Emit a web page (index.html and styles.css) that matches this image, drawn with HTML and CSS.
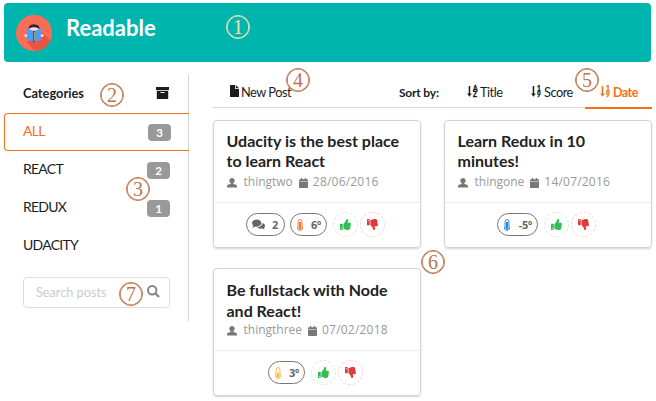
FILE: index.html
```html
<!DOCTYPE html>
<html lang="en">
<head>
<meta charset="utf-8">
<title>Readable</title>
<link rel="stylesheet" href="styles.css">
</head>
<body>
<svg class="defs" width="0" height="0">
  <symbol id="thumb" viewBox="0 0 512 512"><path d="M104 224H24c-13.255 0-24 10.745-24 24v240c0 13.255 10.745 24 24 24h80c13.255 0 24-10.745 24-24V248c0-13.255-10.745-24-24-24zM64 472c-13.255 0-24-10.745-24-24s10.745-24 24-24 24 10.745 24 24-10.745 24-24 24zM384 81.452c0 42.416-25.97 66.208-33.277 94.548h101.723c33.397 0 59.397 27.746 59.553 58.098.084 17.938-7.546 37.249-19.439 49.197l-.11.11c9.836 23.337 8.237 56.037-9.308 79.469 8.681 25.895-.069 57.704-16.382 74.757 4.298 17.598 2.244 32.575-6.148 44.632C440.202 511.587 389.616 512 346.839 512l-2.845-.001c-48.287-.017-87.806-17.598-119.56-31.725-15.957-7.099-36.821-15.887-52.651-16.178-6.54-.12-11.783-5.457-11.783-11.998v-213.77c0-3.2 1.282-6.271 3.558-8.521 39.614-39.144 56.648-80.587 89.117-113.111 14.804-14.832 20.188-37.236 25.393-58.902C282.515 39.293 291.817 0 312 0c24 0 72 8 72 81.452z"/></symbol>
  <symbol id="user" viewBox="0 0 10 10"><path d="M5 0a2.7 2.7 0 0 1 1.7 4.8C6.4 5.1 6.2 5.5 6.3 6l2 .6C9.400 6.900 10 7.600 10 8.600V9.500H0V8.600C0 7.600.6 6.900 1.700 6.600l2-.6c.1-.5-.1-.9-.4-1.200A2.700 2.700 0 0 1 5 0z"/></symbol>
  <symbol id="cal" viewBox="0 0 9 10"><path d="M0 3.500h9v5.600a.9.9 0 0 1-.9.9H.9a.9.900 0 0 1-.9-.9zM0 2.900v-.8c0-.5.4-.9.900-.9h1V0h1.300v1.200h2.600V0h1.300v1.200h1c.5 0 .9.400.9.900v.8z"/></symbol>
  <symbol id="thermo" viewBox="0 0 6 12"><path d="M1.100 7V2.500a1.900 1.900 0 0 1 3.800 0V7a2.600 2.600 0 1 1-3.800 0z" fill="none" stroke="currentColor" stroke-width="1"/><circle cx="3" cy="8.900" r="1.600"/></symbol>
  <symbol id="thermo-full" viewBox="0 0 6 12"><use href="#thermo" width="6" height="12"/><path d="M2 3h2v5H2z"/></symbol>
  <symbol id="thermo-half" viewBox="0 0 6 12"><use href="#thermo" width="6" height="12"/><path d="M2.300 5.500h1.400V8H2.300z"/></symbol>
  <symbol id="chat" viewBox="0 0 13 11"><path d="M4.700.5c2.600 0 4.700 1.500 4.700 3.600S7.300 7.700 4.700 7.700c-.6 0-1.100-.1-1.600-.2C2.300 8 1.300 8.400.200 8.400c.5-.6.900-1.100 1-1.900C.4 5.900 0 5.100 0 4.100 0 2 2.100.5 4.700.5z"/><path d="M10.300 4c1.600.5 2.700 1.500 2.700 2.900 0 .8-.4 1.500-1 2 .1.600.5 1.100.9 1.500-1 0-1.900-.3-2.600-.8-1.900.4-4-.2-5-1.400C8 8.200 10.400 6.500 10.300 4z"/></symbol>
  <symbol id="arrow" viewBox="0 0 5 11"><path d="M1.700 0h1.500v7.500h1.600L2.450 10.800.1 7.500h1.600z"/></symbol>
</svg>

<header class="banner">
  <svg class="logo" viewBox="0 0 36 36">
    <defs><clipPath id="disc"><circle cx="18" cy="18" r="18"/></clipPath></defs>
    <circle cx="18" cy="18" r="18" fill="#fb6d56"/>
    <path d="M26 17 40 31 31 40H22L11 27z" fill="#e7563f" clip-path="url(#disc)"/>
    <circle cx="18" cy="14" r="4.800" fill="#f6d7c8"/>
    <path d="M12.500 14c0-3 2.200-4.800 4.500-4.600l1-.9.7 1c3 .1 5.300 1.900 4.800 4.600-2.400-2.400-8.600-2.400-11 0z" fill="#29252b"/>
    <path d="M10.500 13.500 18 16l7.500-2.500v11L18 27l-7.500-2.500z" fill="#529bf5"/>
    <path d="M17.200 16h1.700v11h-1.700z" fill="#27477e"/>
    <path d="m18 17 .8.500v8l-.8.500z" fill="#d9b653"/>
    <circle cx="9.800" cy="20.500" r="1.500" fill="#f6d7c8"/><circle cx="26.200" cy="20.500" r="1.500" fill="#f6d7c8"/>
  </svg>
  <h1 class="brand">Readable</h1>
</header>

<div class="layout">
  <aside class="sidebar">
    <div class="item head"><span>Categories</span>
      <svg class="archive" viewBox="0 0 13 12"><path d="M0 0h13v3H0zM.8 3.700h11.400V12H.8zM4.500 5v1h4V5z" fill-rule="evenodd"/></svg>
    </div>
    <div class="item active"><span class="label">ALL</span><span class="count">3</span></div>
    <div class="item"><span class="label">REACT</span><span class="count">2</span></div>
    <div class="item"><span class="label">REDUX</span><span class="count">1</span></div>
    <div class="item"><span class="label">UDACITY</span></div>
    <div class="search"><span>Search posts</span>
      <svg viewBox="0 0 13 13"><circle cx="5.200" cy="5.200" r="4.200" fill="none" stroke="currentColor" stroke-width="2"/><path d="m8.300 8.300 3.700 3.700" stroke="currentColor" stroke-width="2.200"/></svg>
    </div>
  </aside>

  <main class="main">
    <nav class="tabs">
      <a class="new"><svg class="file" viewBox="0 0 9 12"><path d="M.6 0H5v4h4v7.400a.6.600 0 0 1-.6.600H.6a.6.600 0 0 1-.6-.6V.6A.6.600 0 0 1 .6 0zM5.800 0 9 3.200H5.800z"/></svg>New Post</a>
      <span class="sortby">Sort by:</span>
      <a class="tab title"><svg class="arrow"><use href="#arrow"/></svg><span class="pair"><b>A</b><b>Z</b></span>Title</a>
      <a class="tab score"><svg class="arrow"><use href="#arrow"/></svg><span class="pair"><b>1</b><b>9</b></span>Score</a>
      <a class="tab date"><svg class="arrow"><use href="#arrow"/></svg><span class="pair"><b>1</b><b>9</b></span>Date</a>
    </nav>

    <section class="cards">
      <article class="card">
        <div class="body"><h2>Udacity is the best place<br>to learn React</h2>
          <p class="meta"><svg class="user"><use href="#user"/></svg><span class="name">thingtwo</span><svg class="cal"><use href="#cal"/></svg><span class="day">28/06/2016</span></p></div>
        <div class="actions">
          <span class="pill comments"><svg class="chat"><use href="#chat"/></svg>2</span>
          <span class="pill"><svg class="thermo hot"><use href="#thermo-full"/></svg>6º</span>
          <span class="vote up"><svg><use href="#thumb"/></svg></span><span class="vote down"><svg><use href="#thumb"/></svg></span>
        </div>
      </article>
      <article class="card">
        <div class="body"><h2>Learn Redux in 10<br>minutes!</h2>
          <p class="meta"><svg class="user"><use href="#user"/></svg><span class="name">thingone</span><svg class="cal"><use href="#cal"/></svg><span class="day">14/07/2016</span></p></div>
        <div class="actions">
          <span class="pill wide"><svg class="thermo cold"><use href="#thermo-full"/></svg>-5º</span>
          <span class="vote up"><svg><use href="#thumb"/></svg></span><span class="vote down"><svg><use href="#thumb"/></svg></span>
        </div>
      </article>
      <article class="card tall">
        <div class="body"><h2>Be fullstack with Node<br>and React!</h2>
          <p class="meta"><svg class="user"><use href="#user"/></svg><span class="name">thingthree</span><svg class="cal"><use href="#cal"/></svg><span class="day">07/02/2018</span></p></div>
        <div class="actions">
          <span class="pill"><svg class="thermo warm"><use href="#thermo-half"/></svg>3º</span>
          <span class="vote up"><svg><use href="#thumb"/></svg></span><span class="vote down"><svg><use href="#thumb"/></svg></span>
        </div>
      </article>
    </section>
  </main>
</div>

<span class="mark m1">1</span>
<span class="mark m2">2</span>
<span class="mark m3">3</span>
<span class="mark m4">4</span>
<span class="mark m5">5</span>
<span class="mark m6">6</span>
<span class="mark m7">7</span>
</body>
</html>
```
FILE: styles.css
```css
* { box-sizing: border-box; }
body { margin: 0; padding: 3px 4px 0; width: 656px; height: 401px; overflow: hidden; position: relative; background: #fff; color: #1b1c1d; font-family: Lato, "Liberation Sans", sans-serif; }
.defs { position: absolute; }
svg { display: block; fill: currentColor; flex: none; }
h1, h2, p { margin: 0; }

.banner { display: flex; width: 647px; height: 59px; padding: 12px 12px 0; background: #00b5ad; border-radius: 4px; }
.logo { width: 36px; height: 36px; }
.brand { margin-left: 14px; font-size: 22px; line-height: 26px; font-weight: 700; color: #fff; }

.layout { display: flex; gap: 24px; padding-top: 13px; }
.sidebar { width: 185px; height: 246px; border-right: 1px solid #d4d4d5; }
.item { display: flex; align-items: center; justify-content: space-between; height: 38px; padding: 0 18px 0 19px; font-size: 14px; white-space: nowrap; }
.label { padding-bottom: 3px; letter-spacing: -.75px; }
.head { font-size: 12.8px; font-weight: 700; padding: 0 19px 2px; }
.archive { width: 13px; height: 12px; }
.active { width: 185px; border: 1px solid #f2711c; border-right: 0; border-radius: 4px 0 0 4px; color: #f2711c; padding: 0 18px; }
.count { width: 23px; height: 17px; border-radius: 4px; background: #999; color: #fff; font-size: 11.5px; line-height: 17px; font-weight: 700; text-align: center; }
.search { display: flex; align-items: center; justify-content: space-between; width: 147px; height: 31px; margin: 12px 0 0 19px; padding: 0 9px 2px 12px; border: 1px solid #dedede; border-radius: 4px; font-size: 12.7px; color: #ccc; }
.search svg { width: 13px; height: 13px; color: #858585; }

.main { width: 439px; }
.tabs { display: flex; height: 33px; border-bottom: 1px solid #d9d9da; font-size: 12.8px; line-height: 35px; letter-spacing: -.5px; white-space: nowrap; }
.new { display: flex; width: 186px; padding-left: 17px; }
.file { width: 9px; height: 12px; margin: 10px 2px 0 0; }
.sortby { width: 68px; font-size: 12px; font-weight: 700; letter-spacing: -.2px; }
.tab { display: flex; }
.title { width: 64px; }
.score { width: 54px; }
.date { width: 67px; height: 34px; padding-left: 15px; color: #f2711c; border-bottom: 2px solid #f2711c; font-weight: 700; font-size: 12.5px; }
.arrow { width: 5px; height: 11px; margin-top: 11px; }
.pair { display: flex; flex-direction: column; width: 5px; margin: 11px 2px 0 1px; font-size: 6.5px; line-height: 5.5px; font-weight: 900; letter-spacing: 0; -webkit-text-stroke: .3px; }

.cards { display: grid; grid-template-columns: 208px 208px; gap: 20px 23px; padding-top: 12px; }
.card { height: 128px; border: 1px solid #d4d4d5; border-radius: 4px; box-shadow: 0 1px 2px #d4d4d5; }
.body { height: 82px; padding: 10px 12.5px 0; border-bottom: 1px solid #ececec; }
.card h2 { font-size: 16px; line-height: 20px; font-weight: 700; white-space: nowrap; color: #222; }
.tall h2 { line-height: 21px; }
.meta { display: flex; align-items: center; height: 20px; margin-top: 1px; font: 12px/20px "Open Sans", "Noto Sans", sans-serif; color: #999; white-space: nowrap; }
.tall .meta { margin-top: -1px; }
.meta svg { color: #777; }
.user { width: 10px; height: 10px; margin: 2px 7px 0 0; }
.name { margin-right: 6px; }
.day { letter-spacing: .2px; }
.cal { width: 9px; height: 10px; margin: 2px 5px 0 0; }
.actions { display: flex; align-items: center; justify-content: center; height: 44px; padding: 0 1px 1px 0; }
.pill { display: flex; align-items: center; justify-content: space-between; width: 37px; height: 23px; margin-right: 6px; padding: 0 5px; border: 1px solid #767676; border-radius: 12px; font: 700 11px/21px "Open Sans", sans-serif; letter-spacing: -.3px; color: #666; }
.comments { width: 39px; margin-right: 5px; padding: 0 6px 0 5px; }
.wide { width: 41px; }
.chat { width: 13px; height: 11px; }
.thermo { width: 6px; height: 12px; margin-left: 1px; }
.hot { color: #f2793a; } .cold { color: #3188d3; } .warm { color: #fbb62b; }
.vote { display: flex; align-items: center; justify-content: center; width: 25px; height: 25px; margin-right: 2px; border: 1px dashed; border-radius: 50%; }
.vote svg { width: 11px; height: 11px; }
.up { border-color: #d2f0d9; } .up svg { color: #32bd55; }
.down { border-color: #f8d2d2; } .down svg { color: #dc3c3c; transform: scaleY(-1); }

.mark { position: absolute; width: 24px; height: 24px; border: 1px solid #bb744e; box-shadow: inset 0 0 0 .6px #bb744e; border-radius: 50%; color: #bb744e; font: 20px/22px "Liberation Serif", serif; text-align: center; }
.m1 { left: 226px; top: 15px; color: #f3e3b0; border-color: #f3e3b0; box-shadow: inset 0 0 0 .6px #f3e3b0; }
.m2 { left: 100px; top: 83px; }
.m3 { left: 126px; top: 177px; }
.m4 { left: 286px; top: 68px; }
.m5 { left: 575px; top: 68px; }
.m6 { left: 421px; top: 250px; }
.m7 { left: 119px; top: 282px; }
```
